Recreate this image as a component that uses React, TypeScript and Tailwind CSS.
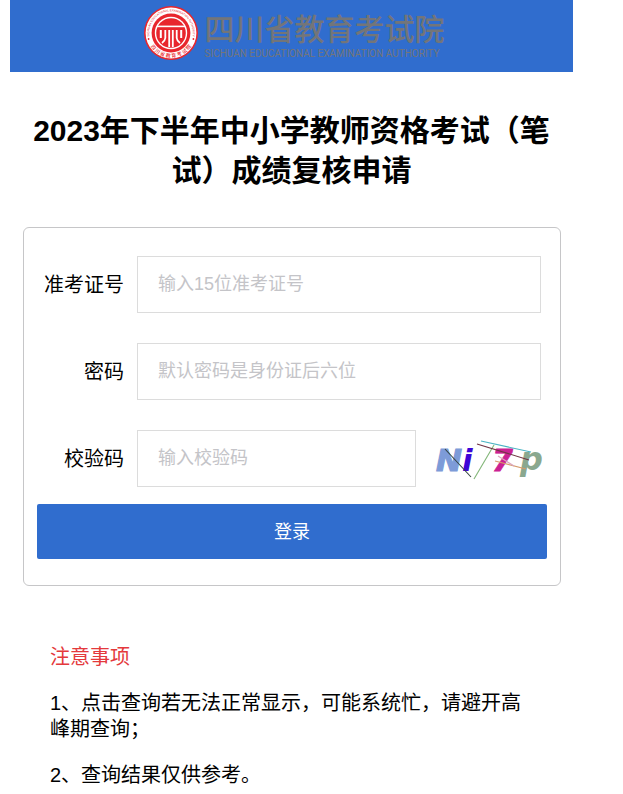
import React from 'react';

const notices = [
  '1、点击查询若无法正常显示，可能系统忙，请避开高峰期查询；',
  '2、查询结果仅供参考。',
];

const inputClass =
  "h-[57px] w-full min-w-0 border border-[#dcdcdc] bg-white px-5 text-lg text-black outline-none placeholder:text-[#c4c4c8] focus:border-[#306dce]";

const Emblem = () => (
  <svg className="h-[56px] w-[56px] shrink-0" viewBox="0 0 56 56" aria-hidden="true">
    <defs>
      <path id="ring-top" d="M6.9 33 A21.7 21.7 0 1 1 49.1 33" />
      <path id="ring-bottom" d="M4.2 34 A24.6 24.6 0 0 0 51.8 34" />
    </defs>
    <circle cx="28" cy="28" r="27" fill="#e8262d" />
    <circle cx="28" cy="28" r="25.4" fill="#fff" />
    <circle cx="28" cy="28" r="19.4" fill="#e8262d" />
    <circle cx="28" cy="28" r="16.2" fill="#fff" />
    <circle cx="28" cy="28" r="14.8" fill="#e8262d" />
    <text fill="#e8262d" fontSize="3" fontFamily="Liberation Sans, sans-serif">
      <textPath href="#ring-top" startOffset="50%" textAnchor="middle">
        SICHUAN EDUCATIONAL EXAMINATION AUTHORITY
      </textPath>
    </text>
    <text fill="#e8262d" fontSize="5" fontWeight="500" fontFamily="Noto Sans CJK SC, sans-serif">
      <textPath href="#ring-bottom" startOffset="50%" textAnchor="middle">
        四 川 省 教 育 考 试 院
      </textPath>
    </text>
    <circle cx="5.6" cy="34" r="0.9" fill="#e8262d" />
    <circle cx="50.4" cy="34" r="0.9" fill="#e8262d" />
    {/* gate mark */}
    <g fill="none" stroke="#fff">
      <path d="M14 21.4H42" strokeWidth="1.6" />
      <path d="M17.8 25V33" strokeWidth="2" />
      <path d="M38.2 25V33" strokeWidth="2" />
      <path d="M22.3 25V33Q22 36 19 38" strokeWidth="1.8" />
      <path d="M33.7 25V33Q34 36 37 38" strokeWidth="1.8" />
      <path d="M26.2 25V42" strokeWidth="1.8" />
      <path d="M29.8 25V42" strokeWidth="1.8" />
    </g>
  </svg>
);

const Captcha = () => (
  <svg
    className="h-11 w-[112px]"
    viewBox="0 0 112 44"
    fontFamily="DejaVu Sans, sans-serif"
    fontWeight="700"
    fontStyle="italic"
  >
    <text x="2" y="34" fontSize="31" fill="#7d9bd8" stroke="#7d9bd8" strokeWidth="1.2">N</text>
    <text x="28" y="34" fontSize="31" fill="#3d05d6">i</text>
    <text x="58" y="34" fontSize="30" fill="#cb2193" stroke="#cb2193" strokeWidth="0.8">7</text>
    <text x="86" y="33" fontSize="32" fill="#8aa88f">p</text>
    <g fill="none" strokeWidth="1.1">
      <path d="M11 12L37 40" stroke="#33433f" />
      <path d="M60 8L40 42" stroke="#82b678" />
      <path d="M47 4L97 15" stroke="#4cb4c4" />
      <path d="M43 7L95 23" stroke="#713544" />
      <path d="M61 24L92 32" stroke="#d59b6b" />
      <path d="M64 19L80 29" stroke="#dba5bc" />
    </g>
  </svg>
);

const Field = ({ id, label, children }: { id: string; label: string; children: React.ReactNode }) => (
  <div className="flex items-center gap-[13px]">
    <label htmlFor={id} className="w-[87px] shrink-0 text-right text-xl text-black">
      {label}
    </label>
    <div className="flex min-w-0 flex-1 items-center gap-[18px]">{children}</div>
  </div>
);

const App = () => {
  return (
    <div className="bg-white pr-[50px] pl-[10px] font-['Liberation_Sans','Noto_Sans_CJK_SC',sans-serif] text-black">
      <header className="flex h-[72px] items-start justify-center gap-[6px] bg-[#306dce] pt-[5px] pl-1">
        <Emblem />
        <div className="pt-[7px] text-[#737579]">
          <div className="text-[30px] leading-[36px] font-medium">四川省教育考试院</div>
          <div className="font-[Roboto,sans-serif] text-[10px] leading-[12px] whitespace-nowrap">
            SICHUAN EDUCATIONAL EXAMINATION AUTHORITY
          </div>
        </div>
      </header>

      <main>
        <h1 className="px-5 pt-[39px] text-center text-[30px] leading-10 font-bold">
          2023年下半年中小学教师资格考试（笔试）成绩复核申请
        </h1>

        <form
          className="mr-3 ml-[13px] mt-9 rounded-md border border-[#c6c6c8] px-[13px] pt-7 pb-[26px]"
          onSubmit={(e) => e.preventDefault()}
        >
          <div className="flex flex-col gap-[30px] pr-[6px]">
            <Field id="ticket" label="准考证号">
              <input id="ticket" type="text" placeholder="输入15位准考证号" className={inputClass} />
            </Field>
            <Field id="password" label="密码">
              <input id="password" type="password" placeholder="默认密码是身份证后六位" className={inputClass} />
            </Field>
            <Field id="captcha" label="校验码">
              <input id="captcha" type="text" placeholder="输入校验码" className={inputClass} />
              <button type="button" aria-label="刷新校验码" className="-mr-[5px] shrink-0 cursor-pointer">
                <Captcha />
              </button>
            </Field>
          </div>
          <button
            type="submit"
            className="mt-[17px] h-[55px] w-full cursor-pointer rounded-xs bg-[#306dce] text-lg text-white"
          >
            登录
          </button>
        </form>

        <section className="mt-[58px] px-10 text-xl leading-[26px]">
          <h2 className="text-[#e4393c]">注意事项</h2>
          {notices.map((notice) => (
            <p key={notice} className="mt-5">
              {notice}
            </p>
          ))}
        </section>
      </main>
    </div>
  );
};

export default App;
